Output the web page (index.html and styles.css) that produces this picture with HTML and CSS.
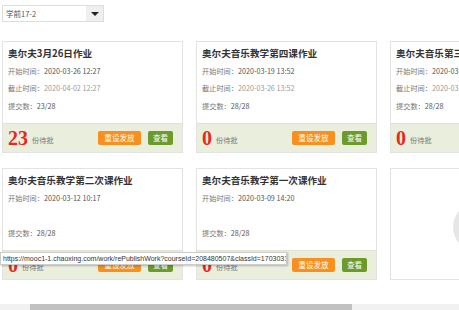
FILE: index.html
```html
<!DOCTYPE html>
<html lang="zh">
<head>
<meta charset="utf-8">
<link rel="stylesheet" href="styles.css">
</head>
<body>
<div class="page">
  <div class="select">
    <div class="select-value">学前17-2</div>
    <div class="select-btn"><span class="caret"></span></div>
  </div>
  <div class="grid">
    <div class="card">
      <div class="card-body">
        <div class="title">奥尔夫3月26日作业</div>
        <div class="line"><span class="lbl">开始时间：</span>2020-03-26 12:27</div>
        <div class="line muted"><span class="lbl">截止时间：</span>2020-04-02 12:27</div>
        <div class="line"><span class="lbl">提交数：</span>23/28</div>
      </div>
      <div class="card-foot">
        <span class="num">23</span><span class="pending">份待批</span>
        <span class="btn orange">重设发放</span><span class="btn green">查看</span>
      </div>
    </div>
    <div class="card">
      <div class="card-body">
        <div class="title">奥尔夫音乐教学第四课作业</div>
        <div class="line"><span class="lbl">开始时间：</span>2020-03-19 13:52</div>
        <div class="line muted"><span class="lbl">截止时间：</span>2020-03-26 13:52</div>
        <div class="line"><span class="lbl">提交数：</span>28/28</div>
      </div>
      <div class="card-foot">
        <span class="num">0</span><span class="pending">份待批</span>
        <span class="btn orange">重设发放</span><span class="btn green">查看</span>
      </div>
    </div>
    <div class="card">
      <div class="card-body">
        <div class="title">奥尔夫音乐第三次课作业</div>
        <div class="line"><span class="lbl">开始时间：</span>2020-03-05 10:00</div>
        <div class="line muted"><span class="lbl">截止时间：</span>2020-03-12 10:00</div>
        <div class="line"><span class="lbl">提交数：</span>28/28</div>
      </div>
      <div class="card-foot">
        <span class="num">0</span><span class="pending">份待批</span>
        <span class="btn orange">重设发放</span><span class="btn green">查看</span>
      </div>
    </div>
    <div class="card">
      <div class="card-body">
        <div class="title">奥尔夫音乐教学第二次课作业</div>
        <div class="line"><span class="lbl">开始时间：</span>2020-03-12 10:17</div>
        <div class="line muted"></div>
        <div class="line"><span class="lbl">提交数：</span>28/28</div>
      </div>
      <div class="card-foot">
        <span class="num">0</span><span class="pending">份待批</span>
        <span class="btn orange">重设发放</span><span class="btn green">查看</span>
      </div>
    </div>
    <div class="card">
      <div class="card-body">
        <div class="title">奥尔夫音乐教学第一次课作业</div>
        <div class="line"><span class="lbl">开始时间：</span>2020-03-09 14:20</div>
        <div class="line muted"></div>
        <div class="line"><span class="lbl">提交数：</span>28/28</div>
      </div>
      <div class="card-foot">
        <span class="num">0</span><span class="pending">份待批</span>
        <span class="btn orange">重设发放</span><span class="btn green">查看</span>
      </div>
    </div>
    <div class="card add">
      <span class="plus-circle"></span>
    </div>
  </div>
</div>
<div class="tooltip">https://mooc1-1.chaoxing.com/work/rePublishWork?courseId=208480507&amp;classId=17030310</div>
<div class="hscroll"><div class="thumb"></div></div>
</body>
</html>
```

FILE: styles.css
```css
html, body { margin: 0; padding: 0; }
body {
  font-family: "Microsoft YaHei", "Noto Sans CJK SC", "Liberation Sans", sans-serif;
  color: #333;
  background: #fff;
  width: 459px;
  height: 310px;
  overflow: hidden;
  position: relative;
}
.page { padding: 5px 0 0 2px; width: 700px; }
.select {
  display: flex;
  width: 102px;
  height: 17px;
  border: 1px solid #ddd;
  box-sizing: border-box;
}
.select-value {
  flex: 1;
  font-size: 7.5px;
  line-height: 15px;
  padding-left: 3px;
  color: #555;
}
.select-btn {
  width: 17px;
  background: #efefef;
  display: flex;
  align-items: center;
  justify-content: center;
}
.caret {
  width: 0; height: 0;
  border-left: 4px solid transparent;
  border-right: 4px solid transparent;
  border-top: 4px solid #222;
}
.grid {
  margin-top: 19px;
  display: grid;
  grid-template-columns: repeat(3, 181px);
  grid-auto-rows: 112px;
  column-gap: 13px;
  row-gap: 15px;
}
.card {
  border: 1px solid #e3e3e3;
  box-sizing: border-box;
  display: flex;
  flex-direction: column;
  background: #fff;
}
.card-body {
  flex: 1;
  padding: 5px 0 0 5px;
  white-space: nowrap;
  overflow: hidden;
}
.title {
  font-size: 9.6px;
  font-weight: bold;
  color: #333;
  line-height: 13px;
  margin-bottom: 2.5px;
}
.line {
  font-size: 7.2px;
  line-height: 17.5px;
  height: 17.5px;
  color: #555;
}
.line .lbl { color: #777; }
.line.muted { color: #999; }
.card-foot {
  height: 29px;
  background: #eaeedd;
  border-top: 1px solid #dfe3d0;
  box-sizing: border-box;
  display: flex;
  align-items: center;
  padding: 0 9px 0 5px;
}
.num {
  font-family: "Liberation Serif", "Times New Roman", serif;
  font-weight: bold;
  font-size: 20px;
  color: #e8281f;
  line-height: 20px;
}
.pending {
  font-size: 7.2px;
  color: #777;
  margin-left: 4px;
  margin-top: 4px;
  flex: 1;
}
.btn {
  font-size: 7.6px;
  color: #fff;
  height: 14px;
  line-height: 14px;
  text-align: center;
  border-radius: 2px;
}
.btn.orange { background: #f7901e; width: 43px; }
.btn.green { background: #6c9a2b; width: 25px; margin-left: 7px; }
.card.add { position: relative; overflow: hidden; }
.plus-circle {
  position: absolute;
  left: 62px;
  top: 34px;
  width: 48px;
  height: 48px;
  border-radius: 50%;
  background: #e6e6e6;
}
.tooltip {
  position: absolute;
  left: 0;
  top: 252px;
  width: 287px;
  height: 13px;
  box-sizing: border-box;
  background: #fff;
  border: 1px solid #ccc;
  box-shadow: 1px 1px 2px rgba(0,0,0,0.25);
  font-family: "Liberation Sans", sans-serif;
  font-size: 7px;
  line-height: 11px;
  padding-left: 2px;
  color: #333;
  white-space: nowrap;
  overflow: hidden;
}
.hscroll {
  position: absolute;
  left: 0;
  bottom: 0;
  width: 459px;
  height: 6px;
  background: #f1f1f1;
}
.thumb {
  margin-left: 30px;
  width: 322px;
  height: 6px;
  background: #c1c1c1;
}
```
